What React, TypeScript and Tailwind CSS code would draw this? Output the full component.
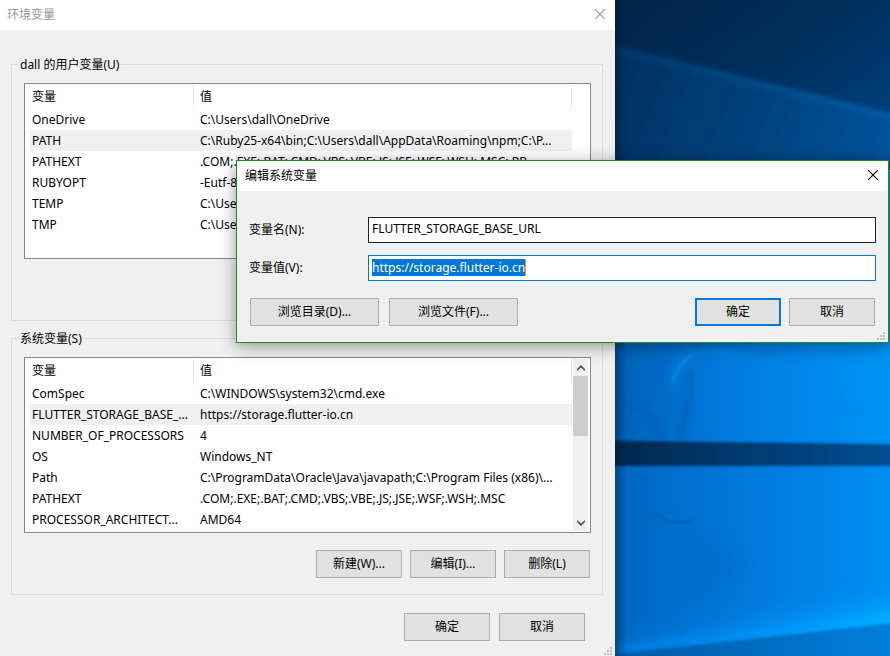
import { useEffect, useRef } from 'react';
import type { ReactNode } from 'react';
import clsx from 'clsx';

type Variable = { name: string; value: string; selected?: boolean };

const userVariables: Variable[] = [
  { name: 'OneDrive', value: 'C:\\Users\\dall\\OneDrive' },
  { name: 'PATH', value: 'C:\\Ruby25-x64\\bin;C:\\Users\\dall\\AppData\\Roaming\\npm;C:\\P...', selected: true },
  { name: 'PATHEXT', value: '.COM;.EXE;.BAT;.CMD;.VBS;.VBE;.JS;.JSE;.WSF;.WSH;.MSC;.RB...' },
  { name: 'RUBYOPT', value: '-Eutf-8' },
  { name: 'TEMP', value: 'C:\\Users' },
  { name: 'TMP', value: 'C:\\Users' },
];

const systemVariables: Variable[] = [
  { name: 'ComSpec', value: 'C:\\WINDOWS\\system32\\cmd.exe' },
  { name: 'FLUTTER_STORAGE_BASE_...', value: 'https://storage.flutter-io.cn', selected: true },
  { name: 'NUMBER_OF_PROCESSORS', value: '4' },
  { name: 'OS', value: 'Windows_NT' },
  { name: 'Path', value: 'C:\\ProgramData\\Oracle\\Java\\javapath;C:\\Program Files (x86)\\...' },
  { name: 'PATHEXT', value: '.COM;.EXE;.BAT;.CMD;.VBS;.VBE;.JS;.JSE;.WSF;.WSH;.MSC' },
  { name: 'PROCESSOR_ARCHITECT...', value: 'AMD64' },
];

function Button({ children, wide, primary }: { children: ReactNode; wide?: boolean; primary?: boolean }) {
  return (
    <button
      type="button"
      className={clsx(
        'flex h-7 items-center justify-center bg-[#e1e1e1] whitespace-nowrap',
        wide ? 'w-[129px]' : 'w-[86px]',
        primary ? 'border-2 border-[#0078d7]' : 'border border-[#adadad]'
      )}
    >
      {children}
    </button>
  );
}

function TitleBar({ title, inactive }: { title: string; inactive?: boolean }) {
  return (
    <header className={clsx('flex h-[30px] items-center justify-between bg-white pr-2.5', inactive ? 'pl-[7px] text-[#999999]' : 'pl-2 text-black')}>
      <h2>{title}</h2>
      <button type="button" aria-label="关闭" className="flex pb-0.5">
        <svg className="size-[10px]" viewBox="0 0 10 10" fill="none" stroke="currentColor" strokeWidth="1.200">
          <path d="M0 0l10 10M10 0L0 10" />
        </svg>
      </button>
    </header>
  );
}

function ResizeGrip() {
  return (
    <svg className="size-2" viewBox="0 0 8 8" fill="#bfbfbf" aria-hidden="true">
      <path d="M6 0h2v2H6zM3 3h2v2H3zM6 3h2v2H6zM0 6h2v2H0zM3 6h2v2H3zM6 6h2v2H6z" />
    </svg>
  );
}

function ScrollBar() {
  return (
    <div className="mt-px mr-0.5 mb-px ml-px flex w-[15px] flex-col bg-[#f0f0f0] text-[#505050]">
      <button type="button" aria-label="向上滚动" className="flex h-[17px] items-center justify-center">
        <svg className="h-1.5 w-2" viewBox="0 0 8 6" fill="currentColor">
          <path d="M4 0l4 4v2L4 2.600 0 6V4z" />
        </svg>
      </button>
      <div className="h-[60px] bg-[#cdcdcd]" />
      <button type="button" aria-label="向下滚动" className="mt-auto flex h-[17px] items-center justify-center">
        <svg className="h-1.5 w-2" viewBox="0 0 8 6" fill="currentColor">
          <path d="M4 6l4-4V0L4 3.400 0 0v2z" />
        </svg>
      </button>
    </div>
  );
}

function VariableGroup({ title, variables, scroll }: { title: string; variables: Variable[]; scroll?: boolean }) {
  return (
    <fieldset className="min-w-0 border border-[#dcdcdc] px-1.5 pb-4">
      <legend className="px-0.5 leading-[15px]">{title}</legend>

      <div className="pt-[11px] pr-[5px] pl-1.5">

        {/* Variable list */}
        <div className="flex h-44 border border-[#828790] bg-white pl-[5px]">
          <div className="min-w-0 flex-1">
            <table className="w-full table-fixed text-left whitespace-nowrap">
              <thead>
                <tr className="h-[25px]">
                  <th className="w-[164px] p-0 pt-px font-normal">
                    <div className="flex h-6 items-center border-r border-[#e5e5e5] pl-0.5">变量</div>
                  </th>
                  <th className="p-0 pt-px font-normal">
                    <div className="flex h-6 items-center border-r border-[#e5e5e5] pl-1.5">值</div>
                  </th>
                </tr>
              </thead>
              <tbody>
                {variables.map((v) => (
                  <tr key={v.name} className={clsx('h-[21px]', v.selected && 'bg-[#f0f0f0]')}>
                    <td className="p-0 pl-0.5">{v.name}</td>
                    <td className="overflow-hidden p-0 pl-1.5">{v.value}</td>
                  </tr>
                ))}
              </tbody>
            </table>
          </div>
          {scroll ? <ScrollBar /> : <div className="w-[18px]" />}
        </div>

        <div className="mt-[17px] flex justify-end gap-2 pr-px">
          <Button>新建(W)...</Button>
          <Button>编辑(I)...</Button>
          <Button>删除(L)</Button>
        </div>
      </div>
    </fieldset>
  );
}

function EditDialog() {
  const valueInput = useRef<HTMLInputElement>(null);

  useEffect(() => {
    valueInput.current?.focus();
    valueInput.current?.select();
  }, []);

  return (
    <section className="absolute top-40 right-px left-[236px] border border-[#1f8a1f] bg-[#f0f0f0] shadow-[0_3px_16px_rgba(0,0,0,0.4)]">
      <TitleBar title="编辑系统变量" />

      <form className="pt-[26px]" onSubmit={(e) => e.preventDefault()}>
        <div className="flex items-center px-3">
          <label htmlFor="var-name" className="w-[119px]">变量名(N):</label>
          <input
            id="var-name"
            defaultValue="FLUTTER_STORAGE_BASE_URL"
            className="h-[26px] min-w-0 flex-1 border border-[#222222] bg-white px-[3px] pb-1 outline-none"
          />
        </div>

        <div className="mt-3 flex items-center px-3">
          <label htmlFor="var-value" className="w-[119px]">变量值(V):</label>
          <div className="flex h-[26px] min-w-0 flex-1 items-start border border-[#0078d7] bg-white px-[3px] pt-[3px]">
            <input
              id="var-value"
              ref={valueInput}
              defaultValue="https://storage.flutter-io.cn"
              className="h-[17px] max-w-full field-sizing-content caret-transparent outline-none selection:bg-[#0078d7] selection:text-white"
            />
            {/* text caret */}
            <span className="h-[17px] w-px bg-[#ff8728]" />
          </div>
        </div>

        <div className="mt-[17px] flex px-[13px]">
          <div className="flex gap-2.5">
            <Button wide>浏览目录(D)...</Button>
            <Button wide>浏览文件(F)...</Button>
          </div>
          <div className="ml-auto flex gap-2">
            <Button primary>确定</Button>
            <Button>取消</Button>
          </div>
        </div>
      </form>

      <div className="mt-1.5 flex justify-end pr-[3px] pb-0.5">
        <ResizeGrip />
      </div>
    </section>
  );
}

function Wallpaper() {
  return (
    <svg className="absolute inset-0 size-full" viewBox="0 0 275 656" preserveAspectRatio="none" aria-hidden="true">
      <defs>
        <linearGradient id="sky" x1="0" y1="0" x2="1" y2="1">
          <stop offset="0" stopColor="#002348" />
          <stop offset="0.5" stopColor="#003160" />
          <stop offset="1" stopColor="#004a8c" />
        </linearGradient>
        <linearGradient id="ray" x1="0" y1="0" x2="1" y2="0.3">
          <stop offset="0" stopColor="#002f5e" />
          <stop offset="0.5" stopColor="#004079" />
          <stop offset="1" stopColor="#005299" />
        </linearGradient>
        <linearGradient id="beam" x1="0" x2="1">
          <stop offset="0" stopColor="#00386c" />
          <stop offset="1" stopColor="#005cac" />
        </linearGradient>
        <linearGradient id="pane" x1="0" x2="1">
          <stop offset="0" stopColor="#0060b6" />
          <stop offset="0.4" stopColor="#007ade" />
          <stop offset="1" stopColor="#0094f7" />
        </linearGradient>
        <linearGradient id="paneLow" x1="0" x2="1">
          <stop offset="0" stopColor="#0066c0" />
          <stop offset="0.5" stopColor="#007ade" />
          <stop offset="1" stopColor="#008ef2" />
        </linearGradient>
        <linearGradient id="bar" x1="0" x2="1">
          <stop offset="0" stopColor="#002850" />
          <stop offset="1" stopColor="#004f93" />
        </linearGradient>
        <linearGradient id="glow" x1="0" x2="1">
          <stop offset="0" stopColor="#0078dc" />
          <stop offset="0.7" stopColor="#009cff" />
          <stop offset="1" stopColor="#00b0ff" />
        </linearGradient>
        <linearGradient id="floor" x1="0" x2="1">
          <stop offset="0" stopColor="#0058a4" />
          <stop offset="1" stopColor="#0080dc" />
        </linearGradient>
        <linearGradient id="edge" x1="0" x2="1">
          <stop offset="0" stopColor="#001428" stopOpacity="0.4" />
          <stop offset="1" stopColor="#001428" stopOpacity="0" />
        </linearGradient>
        <filter id="soft1" x="-20%" y="-20%" width="140%" height="140%"><feGaussianBlur stdDeviation="1" /></filter>
        <filter id="soft3" x="-50%" y="-50%" width="200%" height="200%"><feGaussianBlur stdDeviation="3" /></filter>
        <filter id="soft10" x="-100%" y="-100%" width="300%" height="300%"><feGaussianBlur stdDeviation="12" /></filter>
      </defs>

      {/* dark upper part with the light ray */}
      <rect width="275" height="200" fill="url(#sky)" />
      <path d="M-10 44L285 116V260H-10z" fill="url(#ray)" filter="url(#soft1)" />
      <path d="M-5 48L280 118" stroke="url(#beam)" strokeWidth="6" fill="none" filter="url(#soft3)" />

      {/* window panes */}
      <rect y="170" width="275" height="272" fill="url(#pane)" />
      <rect y="440" width="275" height="216" fill="url(#paneLow)" />
      <path d="M56 384C62 366 70 354 86 352C98 350 108 352 122 354" stroke="#1492f5" strokeOpacity="0.45" strokeWidth="5" fill="none" filter="url(#soft3)" />
      <path d="M57 382C62 370 68 360 78 355" stroke="#1e96f5" strokeOpacity="0.4" strokeWidth="2" fill="none" filter="url(#soft1)" />
      <path d="M75 372C76 395 70 415 66 438" stroke="#0058ac" strokeOpacity="0.5" strokeWidth="6" fill="none" filter="url(#soft3)" />
      <path d="M0 405C20 402 40 410 46 440" stroke="#0055a4" strokeOpacity="0.3" strokeWidth="8" fill="none" filter="url(#soft3)" />
      <path d="M40 512C50 522 65 526 78 520" stroke="#0052a0" strokeOpacity="0.45" strokeWidth="3" fill="none" filter="url(#soft1)" />
      <path d="M224 392C226 412 240 420 252 405" stroke="#0080dc" strokeOpacity="0.5" strokeWidth="4" fill="none" filter="url(#soft3)" />
      <ellipse cx="85" cy="565" rx="40" ry="35" fill="#0066c2" fillOpacity="0.45" filter="url(#soft10)" />
      <path d="M-5 440.500L280 444.500V466H-5z" fill="url(#bar)" filter="url(#soft1)" />

      {/* glow along the lower sill */}
      <path d="M-10 652L150 622L290 602V632L-10 660z" fill="url(#glow)" filter="url(#soft10)" />
      <path d="M-5 650L280 618" stroke="url(#glow)" strokeWidth="8" fill="none" filter="url(#soft3)" />
      <path d="M-5 655L280 623V670H-5z" fill="url(#floor)" filter="url(#soft1)" />

      <rect width="12" height="656" fill="url(#edge)" />
    </svg>
  );
}

export default function App() {
  return (
    <main className="relative grid min-h-screen grid-cols-[minmax(0,1fr)_275px] overflow-hidden font-['Noto_Sans','Noto_Sans_CJK_SC',sans-serif] text-[12px] leading-4 text-black">

      {/* Environment variables window */}
      <section className="flex flex-col bg-[#f0f0f0]">
        <TitleBar title="环境变量" inactive />

        <div className="flex flex-col gap-2.5 pt-[27px] pr-3 pl-[11px]">
          <VariableGroup title="dall 的用户变量(U)" variables={userVariables} />
          <VariableGroup title="系统变量(S)" variables={systemVariables} scroll />
        </div>

        <div className="mt-[18px] flex justify-end gap-[9px] pr-[30px]">
          <Button>确定</Button>
          <Button>取消</Button>
        </div>

        <div className="mt-auto flex justify-end pt-1 pr-[3px] pb-px">
          <ResizeGrip />
        </div>
      </section>

      {/* Desktop behind the windows */}
      <div className="relative">
        <Wallpaper />
      </div>

      <EditDialog />
    </main>
  );
}
